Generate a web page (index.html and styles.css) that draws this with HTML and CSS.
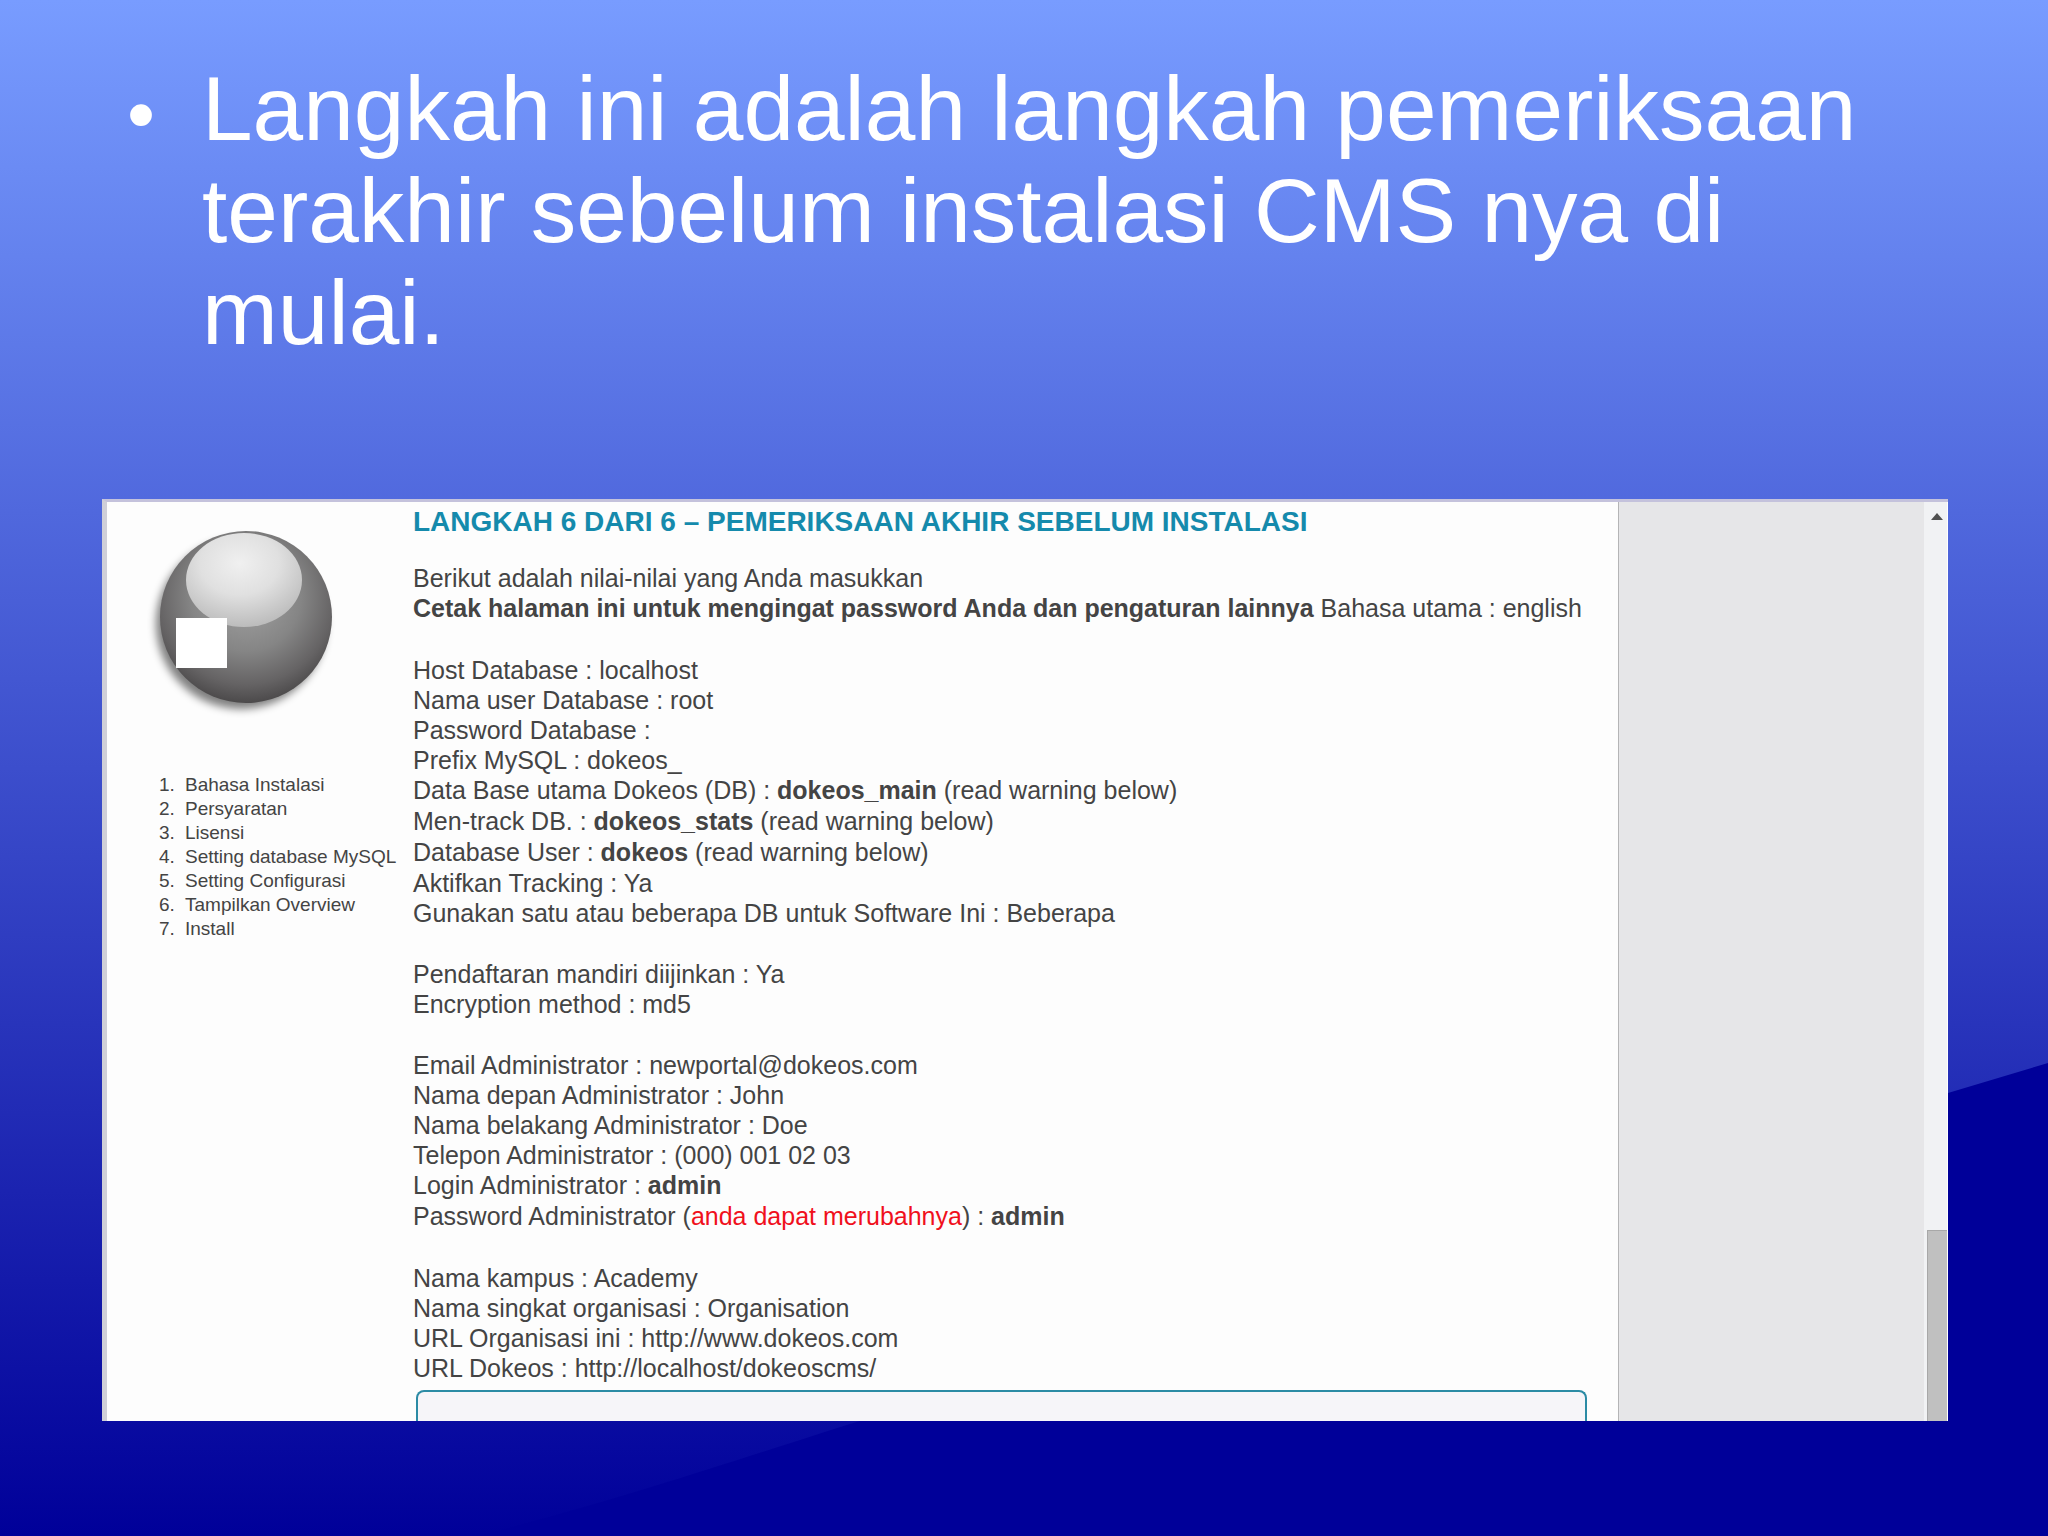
FILE: index.html
```html
<!DOCTYPE html>
<html lang="id">
<head>
<meta charset="utf-8">
<title>Langkah pemeriksaan terakhir</title>
<link rel="stylesheet" href="styles.css">
</head>
<body>
<main class="slide">
  <svg class="swoosh" viewBox="0 0 2048 1536" preserveAspectRatio="none" aria-hidden="true">
    <path d="M2048 1063 L1948 1093 C1560 1206 1220 1304 860 1421 C760 1452 640 1494 480 1536 L2048 1536 Z"/>
  </svg>
  <ul class="points">
    <li>Langkah ini adalah langkah pemeriksaan terakhir sebelum instalasi CMS nya di mulai.</li>
  </ul>
  <section class="capture">
    <aside class="side">
      <svg class="ball" viewBox="0 0 190 190" aria-hidden="true">
        <defs>
          <radialGradient id="body" cx="50%" cy="38%" r="64%">
            <stop offset="0" stop-color="#a4a4a4"/>
            <stop offset="0.5" stop-color="#858585"/>
            <stop offset="0.8" stop-color="#656364"/>
            <stop offset="1" stop-color="#474546"/>
          </radialGradient>
          <radialGradient id="gloss" cx="46%" cy="32%" r="68%">
            <stop offset="0" stop-color="#f0f0f0"/>
            <stop offset="0.5" stop-color="#e0e0e0"/>
            <stop offset="1" stop-color="#bcbcbc"/>
          </radialGradient>
          <filter id="soft" x="-20%" y="-20%" width="140%" height="140%">
            <feGaussianBlur stdDeviation="4"/>
          </filter>
        </defs>
        <circle cx="94" cy="96" r="85" fill="#000" opacity="0.5" filter="url(#soft)"/>
        <circle cx="99" cy="89" r="86" fill="url(#body)"/>
        <ellipse cx="97" cy="52" rx="58" ry="47" fill="url(#gloss)"/>
        <rect x="29" y="90" width="51" height="50" fill="#fff"/>
      </svg>
      <ol class="steps">
        <li>Bahasa Instalasi</li>
        <li>Persyaratan</li>
        <li>Lisensi</li>
        <li>Setting database MySQL</li>
        <li>Setting Configurasi</li>
        <li>Tampilkan Overview</li>
        <li>Install</li>
      </ol>
    </aside>
    <article class="review">
      <h1>LANGKAH 6 DARI 6 – PEMERIKSAAN AKHIR SEBELUM INSTALASI</h1>
      <div class="group">
        <p>Berikut adalah nilai-nilai yang Anda masukkan</p>
        <p class="strong"><b>Cetak halaman ini untuk mengingat password Anda dan pengaturan lainnya</b> Bahasa utama : english</p>
      </div>
      <div class="group">
        <p>Host Database : localhost</p>
        <p>Nama user Database : root</p>
        <p>Password Database :</p>
        <p>Prefix MySQL : dokeos_</p>
        <p class="strong">Data Base utama Dokeos (DB) : <b>dokeos_main</b> (read warning below)</p>
        <p class="strong">Men-track DB. : <b>dokeos_stats</b> (read warning below)</p>
        <p class="strong">Database User : <b>dokeos</b> (read warning below)</p>
        <p>Aktifkan Tracking : Ya</p>
        <p>Gunakan satu atau beberapa DB untuk Software Ini : Beberapa</p>
      </div>
      <div class="group">
        <p>Pendaftaran mandiri diijinkan : Ya</p>
        <p>Encryption method : md5</p>
      </div>
      <div class="group">
        <p>Email Administrator : newportal@dokeos.com</p>
        <p>Nama depan Administrator : John</p>
        <p>Nama belakang Administrator : Doe</p>
        <p>Telepon Administrator : (000) 001 02 03</p>
        <p class="strong">Login Administrator : <b>admin</b></p>
        <p class="strong">Password Administrator (<span class="alert">anda dapat merubahnya</span>) : <b>admin</b></p>
      </div>
      <div class="group">
        <p>Nama kampus : Academy</p>
        <p>Nama singkat organisasi : Organisation</p>
        <p>URL Organisasi ini : http://www.dokeos.com</p>
        <p>URL Dokeos : http://localhost/dokeoscms/</p>
      </div>
      <div class="notice"></div>
    </article>
    <div class="margin"></div>
    <div class="scrollbar">
      <button class="up" type="button" aria-label="Gulir ke atas">
        <svg viewBox="0 0 12 7" aria-hidden="true"><path d="M6 0 L12 7 H0 Z"/></svg>
      </button>
      <div class="thumb"></div>
    </div>
  </section>
</main>
</body>
</html>
```
FILE: styles.css
```css
* {
  box-sizing: border-box;
}

body {
  margin: 0;
  font-family: "Liberation Sans", Arial, sans-serif;
}

.slide {
  position: relative;
  min-height: 100vh;
  padding: 58px 100px 115px 102px;
  background: linear-gradient(#789cff, #000099);
}

.swoosh {
  position: absolute;
  inset: 0;
  width: 100%;
  height: 100%;
  fill: #000099;
}

.points {
  position: relative;
  margin: 0 0 135px;
  padding: 0 0 0 25px;
  list-style: none;
  color: #fff;
  font-size: 91px;
  line-height: 102px;
}

.points li {
  display: grid;
  grid-template-columns: 75px 1fr;
}

.points li::before {
  content: "•";
  padding-top: 6px;
  font-size: 80px;
}

.capture {
  position: relative;
  display: flex;
  border-top: 3px solid #c4c2dc;
  border-left: 5px solid #cfcfd8;
  background: #fdfdfd;
  color: #444;
}

.side {
  flex: none;
  width: 306px;
  padding: 26px 0 0 40px;
}

.ball {
  display: block;
  width: 190px;
  height: 190px;
}

.steps {
  margin: 55px 0 0;
  padding-left: 33px;
  font-size: 19px;
  line-height: 24px;
  white-space: nowrap;
}

.steps li {
  padding-left: 5px;
}

.review {
  flex: 1;
  min-width: 0;
  padding-right: 31px;
  font-size: 25px;
  line-height: 30px;
}

.review h1 {
  margin: 5px 0 26px;
  color: #158aac;
  font-size: 28px;
  line-height: 30px;
}

.review p {
  margin: 0;
}

.review .strong {
  line-height: 31px;
}

.group {
  margin-bottom: 31px;
}

.group:nth-last-child(2) {
  margin-bottom: 7px;
}

.alert {
  color: #f0101c;
}

.notice {
  height: 31px;
  margin-left: 3px;
  border: 2px solid #2c8ba5;
  border-bottom: 0;
  border-radius: 8px 8px 0 0;
  background: #f6f5f9;
}

.margin {
  flex: none;
  width: 306px;
  border-left: 1px solid #b4b4b6;
  background: #e6e6e8;
}

.scrollbar {
  display: flex;
  flex: none;
  flex-direction: column;
  justify-content: space-between;
  width: 24px;
  border-right: 1px solid #fff;
  background: #f1f2f4;
}

.up {
  display: flex;
  justify-content: center;
  padding: 11px 0 11px 3px;
  border: 0;
  background: none;
}

.up svg {
  width: 12px;
  height: 7px;
  fill: #505050;
}

.thumb {
  height: 191px;
  margin-left: 3px;
  border: 1px solid #a8a8a8;
  border-width: 1px 0 0 1px;
  background: #c0c0c0;
}
```
